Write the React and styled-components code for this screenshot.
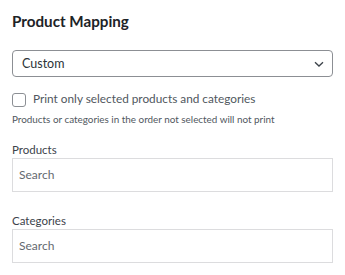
import React from "react";
import styled, { createGlobalStyle } from "styled-components";

const Global = createGlobalStyle`
  body {
    margin: 0;
    background: #fff;
    font-family: "Lato", "Noto Sans", sans-serif;
    color: #1d2327;
  }
`;

const Panel = styled.div`
  padding: 10px 12px 12px 12px;
  width: 321px;
`;

const Title = styled.h2`
  margin: 0 0 18px 0;
  font-size: 15.2px;
  font-weight: 700;
  line-height: 22px;
  color: #1d2327;
`;

const SelectWrap = styled.div`
  height: 27px;
  border: 1px solid #8c8f94;
  border-radius: 4px;
  display: flex;
  align-items: center;
  padding: 0 8px 0 9px;
  box-sizing: border-box;
  font-size: 12.5px;
  color: #2c3338;
`;

const Chevron = styled.svg`
  margin-left: auto;
  width: 10px;
  height: 10px;
`;

const CheckRow = styled.label`
  display: flex;
  align-items: flex-start;
  gap: 7px;
  margin-top: 15px;
  font-size: 11.8px;
  line-height: 14px;
  color: #50575e;
`;

const Box = styled.span`
  width: 14px;
  height: 14px;
  margin-top: 0.5px;
  border: 1px solid #8c8f94;
  border-radius: 3px;
  box-sizing: border-box;
  flex: none;
`;

const Hint = styled.p`
  margin: 5px 0 0 0;
  font-size: 9.9px;
  line-height: 14px;
  color: #50575e;
`;

const Field = styled.div`
  margin-top: ${(p) => p.$gap}px;
`;

const Label = styled.div`
  font-size: 11.5px;
  line-height: 14px;
  color: #3c434a;
  margin-bottom: 1px;
`;

const SearchBox = styled.div`
  height: 34px;
  border: 1px solid #dcdcde;
  box-sizing: border-box;
  display: flex;
  align-items: center;
  padding: 0 6px;
  font-size: 12px;
  color: #646970;
`;

export default function App() {
  return (
    <>
      <Global />
      <Panel>
        <Title>Product Mapping</Title>
        <SelectWrap>
          Custom
          <Chevron viewBox="0 0 10 10" fill="none" stroke="#3c434a" strokeWidth="1.3">
            <path d="M1 3.2 L5 7 L9 3.2" />
          </Chevron>
        </SelectWrap>
        <CheckRow>
          <Box />
          Print only selected products and categories
        </CheckRow>
        <Hint>Products or categories in the order not selected will not print</Hint>
        <Field $gap={17}>
          <Label>Products</Label>
          <SearchBox>Search</SearchBox>
        </Field>
        <Field $gap={22}>
          <Label>Categories</Label>
          <SearchBox>Search</SearchBox>
        </Field>
      </Panel>
    </>
  );
}
